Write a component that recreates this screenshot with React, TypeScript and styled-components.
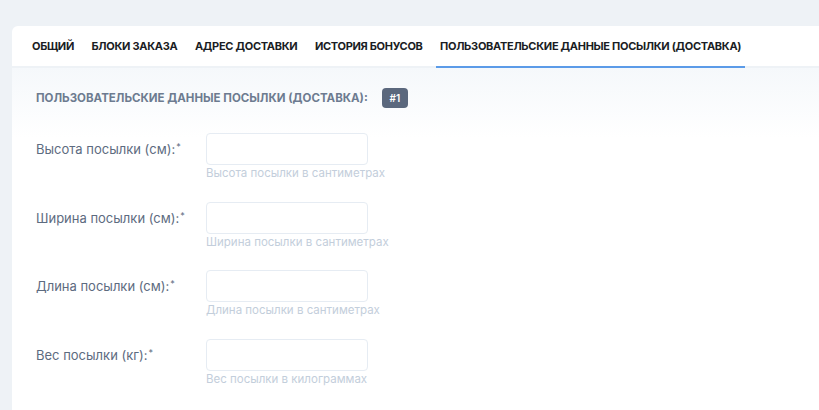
import styled, { createGlobalStyle } from 'styled-components';

const GlobalStyle = createGlobalStyle`
    html, body {
        margin: 0;
        padding: 0;
        background: #eef2f6;
        font-family: Inter, 'Noto Sans', sans-serif;
    }
`;

const tabs = [
    'Общий',
    'Блоки заказа',
    'Адрес доставки',
    'История бонусов',
    'Пользовательские данные посылки (доставка)',
];

const fields = [
    { label: 'Высота посылки (см):', hint: 'Высота посылки в сантиметрах' },
    { label: 'Ширина посылки (см):', hint: 'Ширина посылки в сантиметрах' },
    { label: 'Длина посылки (см):', hint: 'Длина посылки в сантиметрах' },
    { label: 'Вес посылки (кг):', hint: 'Вес посылки в килограммах' },
];

const App = () => {
    return (
        <Page>
            <GlobalStyle />
            <Card>
                <TabBar>
                    {tabs.map((tab, i) => (
                        <Tab key={tab} $active={i === tabs.length - 1}>
                            {tab}
                        </Tab>
                    ))}
                </TabBar>
                <Body>
                    <SectionHead>
                        <SectionTitle>
                            Пользовательские данные посылки (доставка):
                        </SectionTitle>
                        <Badge>#1</Badge>
                    </SectionHead>
                    <Form>
                        {fields.map((f) => (
                            <Row key={f.label}>
                                <Label>
                                    {f.label}
                                    <sup>*</sup>
                                </Label>
                                <Control>
                                    <Input type='text' />
                                    <Hint>{f.hint}</Hint>
                                </Control>
                            </Row>
                        ))}
                    </Form>
                </Body>
            </Card>
        </Page>
    );
};

const Page = styled.div`
    padding: 26px 0 0 12px;
    height: 384px;
    overflow: hidden;
`;

const Card = styled.div`
    background: #fff;
    border-radius: 6px 0 0 0;
    min-height: 400px;
`;

const TabBar = styled.nav`
    display: flex;
    gap: 9.5px;
    padding: 0 20px 0 16px;
    height: 40px;
    border-bottom: 2px solid #eef2f6;
`;

const Tab = styled.div<{ $active: boolean }>`
    display: flex;
    align-items: center;
    padding: 0 4px;
    margin-bottom: -2px;
    font-size: 11px;
    font-weight: 700;
    letter-spacing: -0.3px;
    text-transform: uppercase;
    color: #1a1d24;
    white-space: nowrap;
    border-bottom: 2px solid
        ${({ $active }) => ($active ? '#5b9be8' : 'transparent')};
`;

const Body = styled.div`
    padding: 18px 24px 0;
    background: linear-gradient(#f5f8fb, #ffffff 70px);
`;

const SectionHead = styled.div`
    display: flex;
    align-items: center;
    gap: 14px;
    height: 24px;
`;

const SectionTitle = styled.h2`
    margin: 0;
    font-size: 11.5px;
    font-weight: 700;
    text-transform: uppercase;
    color: #6d7b90;
`;

const Badge = styled.span`
    display: inline-flex;
    align-items: center;
    justify-content: center;
    width: 26px;
    height: 20px;
    border-radius: 4px;
    background: #5b687d;
    color: #fff;
    font-size: 10px;
    font-weight: 600;
`;

const Form = styled.div`
    display: flex;
    flex-direction: column;
    gap: 20.7px;
    margin-top: 23px;
`;

const Row = styled.div`
    display: grid;
    grid-template-columns: 170px 162px;
    align-items: start;
`;

const Label = styled.label`
    height: 32px;
    display: flex;
    align-items: center;
    font-size: 13px;
    color: #5d6b80;
    sup {
        align-self: flex-start;
        margin-top: 8px;
        font-size: 9px;
        margin-left: 1px;
    }
`;

const Control = styled.div`
    display: flex;
    flex-direction: column;
`;

const Input = styled.input`
    box-sizing: border-box;
    width: 162px;
    height: 32px;
    border: 1px solid #e6ecf3;
    border-radius: 4px;
    background: #fff;
    outline: none;
`;

const Hint = styled.span`
    font-size: 11.5px;
    line-height: 16px;
    color: #c3cedb;
    white-space: nowrap;
`;

export default App;
